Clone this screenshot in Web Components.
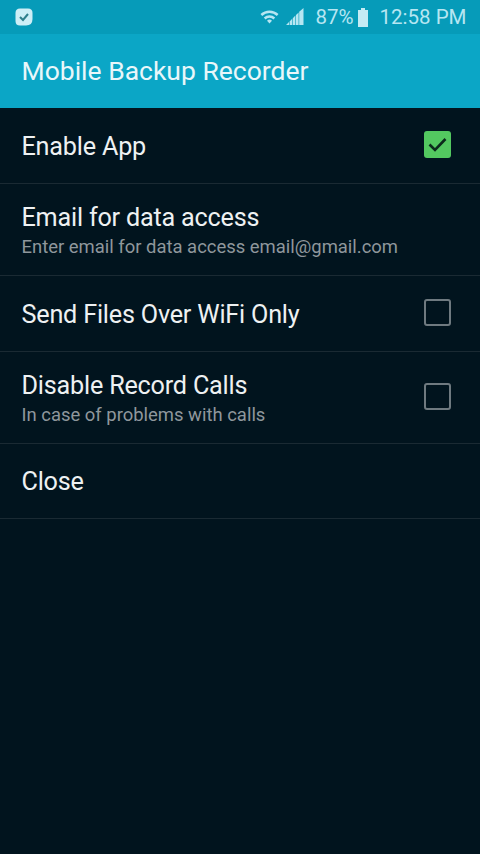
<!DOCTYPE html>
<html>
<head>
<meta charset="utf-8">
<title>Mobile Backup Recorder</title>
<style>
    html, body { margin: 0; padding: 0; height: 100%; }
    body { background: #01141e; font-family: Roboto, "Liberation Sans", sans-serif; }
    #app { display: flex; flex-direction: column; width: 480px; height: 854px; overflow: hidden; }
</style>
</head>
<body>
<div id="app">
    <status-bar></status-bar>
    <action-bar>Mobile Backup Recorder</action-bar>
    <pref-row height="76" check="on">Enable App</pref-row>
    <pref-row height="92" summary="Enter email for data access email@gmail.com">Email for data access</pref-row>
    <pref-row height="76" check="off">Send Files Over WiFi Only</pref-row>
    <pref-row height="92" check="off" summary="In case of problems with calls">Disable Record Calls</pref-row>
    <pref-row height="75">Close</pref-row>
</div>
<script>
class StatusBar extends HTMLElement
{
    constructor()
    {
        super();
        const Shadow = this.attachShadow({mode: "open"});
        Shadow.innerHTML = `
            <style>
                :host {
                    display: flex;
                    align-items: center;
                    flex: none;
                    height: 34px;
                    padding: 0 13.5px 0 14px;
                    background: #069bb9;
                    color: #b6e6f2;
                    font-size: 20.5px;
                }
                svg { display: block; flex: none; }
                .spacer { flex: 1; }
                .pct { margin-left: 11px; }
                .batt { margin-left: 3px; }
                .time { margin-left: 11px; }
            </style>
            <svg width="20" height="20" viewBox="0 0 20 20">
                <path d="M6 1.500h8q4.500 0 4.500 4.500v6q0 6.500-6.500 6.500H6Q1.500 18.500 1.500 14V6Q1.500 1.500 6 1.500z" fill="#cdeef6"/>
                <path d="M6 10l3 3 5-6" fill="none" stroke="#2f7f8c" stroke-width="2"/>
            </svg>
            <span class="spacer"></span>
            <svg width="19" height="18" viewBox="0 0 19 18">
                <path d="M0.500 6a13 13 0 0 1 18 0l-1.700 1.900a10.500 10.500 0 0 0-14.600 0zM3.800 9.500a8.300 8.300 0 0 1 11.400 0l-1.700 1.900a5.800 5.800 0 0 0-8 0zM7 12.800a3.500 3.500 0 0 1 5 0L9.500 15.500z" fill="#b6e6f2"/>
            </svg>
            <svg style="margin-left:7px" width="18" height="19" viewBox="0 0 18 19">
                <path d="M0 17l3-3v3zM3.600 17v-3.600l2.600-2.600V17zM6.800 17V10.200l2.600-2.600V17zM10 17V7l2.600-2.600V17zM13.200 17V3.800L17.500 0v17z" fill="#b6e6f2"/>
            </svg>
            <span class="pct">87%</span>
            <svg class="batt" width="12" height="19" viewBox="0 0 12 19">
                <path d="M4 0h4v2h3v17H1V2h3z" fill="#c4ebf4"/>
            </svg>
            <span class="time">12:58 PM</span>
        `;
    }
}

class ActionBar extends HTMLElement
{
    constructor()
    {
        super();
        const Shadow = this.attachShadow({mode: "open"});
        Shadow.innerHTML = `
            <style>
                :host {
                    display: flex;
                    align-items: center;
                    flex: none;
                    height: 74px;
                    padding: 0 22px 2px 21.5px;
                    box-sizing: border-box;
                    background: #0ba6c6;
                    color: #e9f7fa;
                    font-size: 26.5px;
                }
            </style>
            <slot></slot>
        `;
    }
}

class PrefRow extends HTMLElement
{
    constructor()
    {
        super();
        const Shadow = this.attachShadow({mode: "open"});
        Shadow.innerHTML = `
            <style>
                :host {
                    display: flex;
                    align-items: center;
                    flex: none;
                    box-sizing: border-box;
                    padding: 0 29px 0 21.5px;
                    border-bottom: 1px solid #1a2a33;
                    color: #eef1f2;
                }
                .text { flex: 1; min-width: 0; padding-top: 2px; }
                .title { font-size: 25.2px; line-height: 30px; letter-spacing: -0.2px; }
                .summary { font-size: 18.45px; line-height: 22px; color: #8f979c; margin-top: 3px; }
                .box {
                    flex: none;
                    box-sizing: border-box;
                    width: 27px;
                    height: 27px;
                    margin-bottom: 2px;
                    border: 2px solid #6f7a80;
                    border-radius: 3px;
                }
                .box.on { border: 0; background: #53c860; }
                .box svg { display: block; }
            </style>
            <div class="text">
                <div class="title"><slot></slot></div>
            </div>
        `;
    }

    /** fill the row from its attributes */
    connectedCallback() {
        this.style.height = this.getAttribute("height") + "px";

        const summary = this.getAttribute("summary");
        if (summary !== null) {
            let div = document.createElement("div");
            div.className = "summary";
            div.textContent = summary;
            this.shadowRoot.querySelector(".text").appendChild(div);
        }

        const check = this.getAttribute("check");
        if (check !== null) {
            let box = document.createElement("div");
            box.className = "box " + check;
            if (check == "on") {
                box.innerHTML = `<svg width="27" height="27" viewBox="0 0 27 27"><path d="M5.500 13.500l5.500 5.500 10.500-11" fill="none" stroke="#0c2a1c" stroke-width="2.600"/></svg>`;
            }
            this.shadowRoot.appendChild(box);
        }
    }
}

customElements.define("status-bar", StatusBar);
customElements.define("action-bar", ActionBar);
customElements.define("pref-row", PrefRow);
</script>
</body>
</html>
